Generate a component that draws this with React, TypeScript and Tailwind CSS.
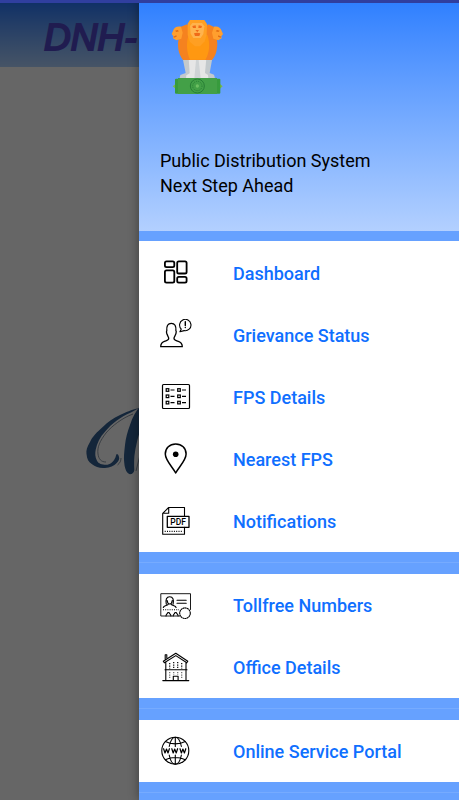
import type { ReactNode } from "react";

const line = {
  fill: "none",
  stroke: "currentColor",
  strokeWidth: 1.1,
  strokeLinejoin: "round",
  strokeLinecap: "round",
} as const;

function Icon({ children }: { children: ReactNode }) {
  return (
    <svg viewBox="0 0 32 32" className="size-8 shrink-0 text-black" aria-hidden="true" {...line}>
      {children}
    </svg>
  );
}

const DashboardIcon = () => (
  <Icon>
    <g strokeWidth="1.8">
      <rect x="4.9" y="4.3" width="9.4" height="5.8" rx="1.6" />
      <rect x="17.2" y="4.3" width="9.4" height="12.2" rx="1.6" />
      <rect x="4.9" y="13.4" width="9.4" height="12.2" rx="1.6" />
      <rect x="17.2" y="19.8" width="9.4" height="5.8" rx="1.6" />
    </g>
  </Icon>
);

const GrievanceIcon = () => (
  <Icon>
    <path
      strokeWidth="1.3"
      d="M.7 27.700c0-3.200 1.400-4.600 4.300-5.500 2.200-.7 3.700-1.100 3.700-2.600 0-1.200-.6-1.700-1-2.900-.4-1.100-.6-1.200-1-2.400-.4-1.300-.3-2 .1-2.600-.4-4.700 1-7.400 4.500-7.400s5 2.700 4.600 7.400c.5.600.5 1.300.1 2.600-.3 1.200-.6 1.300-1 2.400-.4 1.200-1 1.700-1 2.900 0 1.500 1.500 1.900 3.700 2.600 2.900.9 4.600 2.300 4.600 5.500z"
    />
    <path d="M21.300 10.100a5.700 5.700 0 1 1 2.800 1.500l-4.200 1.200z" />
    <path strokeWidth="1.4" d="M25.300 2.800v3.700M25.300 8.500v.1" />
  </Icon>
);

const DetailsIcon = () => (
  <Icon>
    <rect x="2.5" y="3.5" width="27" height="24" rx="1" strokeWidth="1.2" />
    {[9, 15.3, 21.6].map((y) => (
      <g key={y} strokeLinecap="butt" strokeLinejoin="miter" strokeWidth="1.2">
        <rect x="6.2" y={y - 1.3} width="2.6" height="2.6" />
        <path d={`M10.500 ${y}h4M22 ${y}h4`} />
        <rect x="17.7" y={y - 1.3} width="2.6" height="2.6" />
      </g>
    ))}
  </Icon>
);

const PinIcon = () => (
  <Icon>
    <path
      strokeWidth="1.5"
      d="M15.700 30c-2.700-5.600-10.400-12.400-10.400-19C5.300 5 9.700 1 15.700 1s10.400 4 10.400 10c0 6.600-7.700 13.400-10.400 19z"
    />
    <circle cx="15.7" cy="11.3" r="2.8" fill="currentColor" stroke="none" />
  </Icon>
);

const PdfIcon = () => (
  <Icon>
    <path d="M24.500 11.300V2.500H8.700L2.700 8.300v21h21.800v-7M8.700 2.500v5.800h-6" />
    <rect x="7.3" y="11.3" width="21.7" height="11" strokeWidth="1.3" />
    <path d="M4.700 26.400h18.500" strokeDasharray="1 1.300" strokeLinecap="butt" />
    <text
      x="18.2"
      y="19.8"
      fontSize="8.500"
      fontWeight="500"
      textAnchor="middle"
      fill="currentColor"
      stroke="none"
      className="font-['Roboto',sans-serif]"
    >
      PDF
    </text>
  </Icon>
);

const TollfreeIcon = () => (
  <Icon>
    <path strokeWidth=".9" d="M20 27H.8V4.700h29.700v15.800" />
    <path d="M6.300 15.200c-1-4.800.2-7.500 3.400-7.500s4.400 2.700 3.400 7.500M7.200 11.500c.4 4.600 4.600 4.600 5 0M8.200 15c0 1.700-4.400 1.400-4.900 3.500M11.200 15c0 1.700 4.400 1.400 4.900 3.500" />
    <path d="M17 11.200h9.200M17 14.300h9.200" />
    <path d="M3 20.800h16" strokeDasharray="1 1.200" strokeLinecap="butt" />
    <path d="M6 27c0-1.700.9-1.700 1.300-2.500.1-1.300 2.200-1.300 2.300 0 .4.800 1.300.8 1.300 2.500M13.200 27c0-1.700.9-1.700 1.300-2.500.1-1.300 2.200-1.300 2.300 0 .4.800 1.300.8 1.300 2.500" />
    <circle cx="25" cy="24.200" r="5.300" fill="#fff" strokeDasharray="1.900 .3" strokeLinecap="butt" />
  </Icon>
);

const OfficeIcon = () => (
  <Icon>
    <path d="M3.300 10.300 15.800 2.300l12 8-1 1.500-11-7.200-11.500 7.200zM5.200 8V3.800h1.600v3M5.800 11.500v17.800M26 11.500v17.800M2.800 29.600h26" />
    <path d="M5 18.800h22" />
    <path d="M13.300 29.500v-4.200h4.800v4.200" />
    <g strokeLinecap="butt" strokeDasharray="1.300 1.100" strokeWidth="1.200">
      <path d="M9.700 12v5.500M13.700 11v6.500M17.700 11v6.500M21.700 12v5.500" />
      <path d="M9.700 21v6.500M13.700 21v3M17.700 21v3M21.700 21v6.500" opacity=".6" />
    </g>
  </Icon>
);

const PortalIcon = () => (
  <Icon>
    <circle cx="15.300" cy="15.700" r="13.500" />
    <path d="M15.300 2.200v9.300M15.300 20v9.200M9.200 11.500c1-4.900 3.200-9.300 6.100-9.300s5.100 4.400 6.100 9.300M9.200 20c1 5 3.200 9.200 6.100 9.200s5.100-4.200 6.100-9.200M5.400 6.600c5.500 3 14.300 3 19.800 0M5.400 24.800c5.500-3 14.300-3 19.800 0" />
    <path
      strokeWidth="1.200"
      d="M3.600 13.700l1.400 4.300 1.500-4 1.500 4 1.400-4.300M11.800 13.700l1.400 4.300 1.500-4 1.500 4 1.400-4.300M20 13.700l1.400 4.300 1.500-4 1.500 4 1.400-4.300"
    />
  </Icon>
);

const Emblem = () => (
  <svg viewBox="15 24 225 231" className="h-[77px] w-[75px]" aria-hidden="true">
    <path fill="#c3c9cc" d="M83 145l9 44-16 6-2 10h106l-3-11-13-5 8-44z" />
    <path fill="#e6e6e6" d="M101 145l3 45-10 6-1 9h67l-1-10-9-6 4-44z" />
    <path fill="#cfd3d5" d="M123 150h8l6 55h-19z" />
    <path fill="#f5821f" d="M76 51l20-8 26 30 38-30 22 10 5 48c-1 24-6 37-16 49H84c-12-16-15-30-15-50z" />
    <path fill="#ff9811" d="M101 75c-8 22-6 55 4 74h46c13-20 15-50 6-74z" />
    <path fill="#ff9f2e" d="M78 50c-12-2-21 2-24 13l-4 9 5 7-1 6 10 6 15-5 4-18zM177 50c12-2 20 3 23 13l4 9-5 7 1 6-10 6-15-5-4-18z" />
    <path fill="#e06a12" d="M60 62l8-2 4 4-8 2zM55 80l9-4 1 4-8 3zM194 62l-8-2-4 4 8 2zM199 80l-9-4-1 4 8 3z" />
    <path fill="#ff9f22" d="M105 30h43l8 12-1 32-6 20-14 15h-15l-15-13-7-21V41z" />
    <path fill="#ffb34d" d="M112 39h29l7 10-3 23-8 12h-22l-8-13-2-23z" />
    <path fill="#f06b18" d="M112 48l10-2 1 8h-9zM131 46l10 2-2 6h-9zM121 60h11l-5 7zM117 70l9-2 10 2-3 8h-13z" />
    <path fill="#78b94b" d="M53 229l9-7v14zM203 229l-8-7v14z" />
    <rect x="60" y="206" width="136" height="45" rx="3" fill="#379b3d" />
    <path fill="#43a047" d="M69 204h117v48H69z" />
    <g fill="none" stroke="#277e35" strokeWidth="3">
      <circle cx="127" cy="228" r="21" />
      <circle cx="127" cy="228" r="14" strokeDasharray="3 3" />
    </g>
    <circle cx="127" cy="228" r="5" fill="#6dbf62" />
  </svg>
);

const MENU_GROUPS = [
  [
    { name: "Dashboard", icon: DashboardIcon },
    { name: "Grievance Status", icon: GrievanceIcon },
    { name: "FPS Details", icon: DetailsIcon },
    { name: "Nearest FPS", icon: PinIcon },
    { name: "Notifications", icon: PdfIcon },
  ],
  [
    { name: "Tollfree Numbers", icon: TollfreeIcon },
    { name: "Office Details", icon: OfficeIcon },
  ],
  [{ name: "Online Service Portal", icon: PortalIcon }],
];

function HomePage() {
  return (
    <div className="min-h-screen bg-white">
      <header className="flex h-[67px] items-center overflow-hidden bg-linear-to-b from-[#2176ff] to-[#b0d2ff] pt-2 pl-11">
        <h1 className="font-['Liberation_Sans',sans-serif] text-[37px] font-normal whitespace-nowrap text-[#5048c8] italic [-webkit-text-stroke:2px_#5048c8]">
          DNH-
        </h1>
      </header>
      <main className="pt-[332px] pl-[84px]">
        <svg viewBox="0 0 70 80" className="h-20 w-[70px]" fill="#345f91" aria-hidden="true">
          <path d="M55 9C47 11 42 13 36 16 29 19 24 23 19 27.700 13 33 8 38 6 43c-3 5-4 8-3.500 12 .5 5 2 8 5.200 10 4 3 8 4.500 13.300 4 5-.5 9-2 11.700-5 2-2 3-4 2.300-6-.5-2-1-3-2.300-3-1 1-.7 3-1.700 4.300-2 4-5 6.500-9 6.500-4 0-7.500-1-9-4-2-4-2-7-1.300-11C13 44 16 38 21 32.700 28 24.500 36 18 47 13.500z" />
          <path d="M57 6c-5 6-8.500 12-11 20-2.500 7-4.300 13-5 20-.8 7-1.500 13-.7 18.300.5 6 2.500 10 5.700 11 2.500 0 4-2 4.300-4.300C50 65 50 58 51 52.700c1-6 2-10 3.300-15L60 20z" />
          <path
            d="M49 15C38 19 28 27 22 34c-6 8-9 14-8 21 .7 5 3 8 8 8M52 72l4-16M33.500 66c2.500-2 3.500-4 3.500-7"
            fill="none"
            stroke="#707f91"
            strokeWidth=".8"
          />
        </svg>
      </main>
    </div>
  );
}

function Drawer() {
  return (
    <aside className="absolute inset-y-0 right-0 flex w-80 flex-col bg-[#66a1ff] pt-[3px] shadow-[0_0_10px_rgba(0,0,0,0.4)]">
      <div className="flex h-[228px] flex-col bg-linear-to-b from-[#2f80ff] to-[#b3d0ff] px-[21px] pt-[15px]">
        <Emblem />
        <p className="mt-[53px] text-lg leading-[25px] text-black">
          Public Distribution System
          <br />
          Next Step Ahead
        </p>
      </div>
      <nav className="pt-[10px]">
        {MENU_GROUPS.map((group, index) => (
          <div key={group[0].name}>
            <ul className={index === 0 ? "bg-white pt-px" : "bg-white"}>
              {group.map((item) => (
                <li key={item.name}>
                  <a
                    href="#"
                    className="flex h-[62px] items-center gap-[41px] px-[21px] text-lg font-medium text-[#0f6fff]"
                  >
                    <item.icon />
                    <span className="pt-px">{item.name}</span>
                  </a>
                </li>
              ))}
            </ul>
            <div className={index < MENU_GROUPS.length - 1 ? "h-[22px] pt-[10px]" : "pt-[10px]"}>
              <div className="h-px bg-[#76abff]" />
            </div>
          </div>
        ))}
      </nav>
    </aside>
  );
}

export default function App() {
  return (
    <div className="relative min-h-screen overflow-hidden font-['Roboto',sans-serif]">
      <HomePage />
      <div className="absolute inset-0 bg-black/60" />
      <Drawer />
      <div className="absolute inset-x-0 top-0 h-[3px] bg-[#303f9f]" />
    </div>
  );
}
